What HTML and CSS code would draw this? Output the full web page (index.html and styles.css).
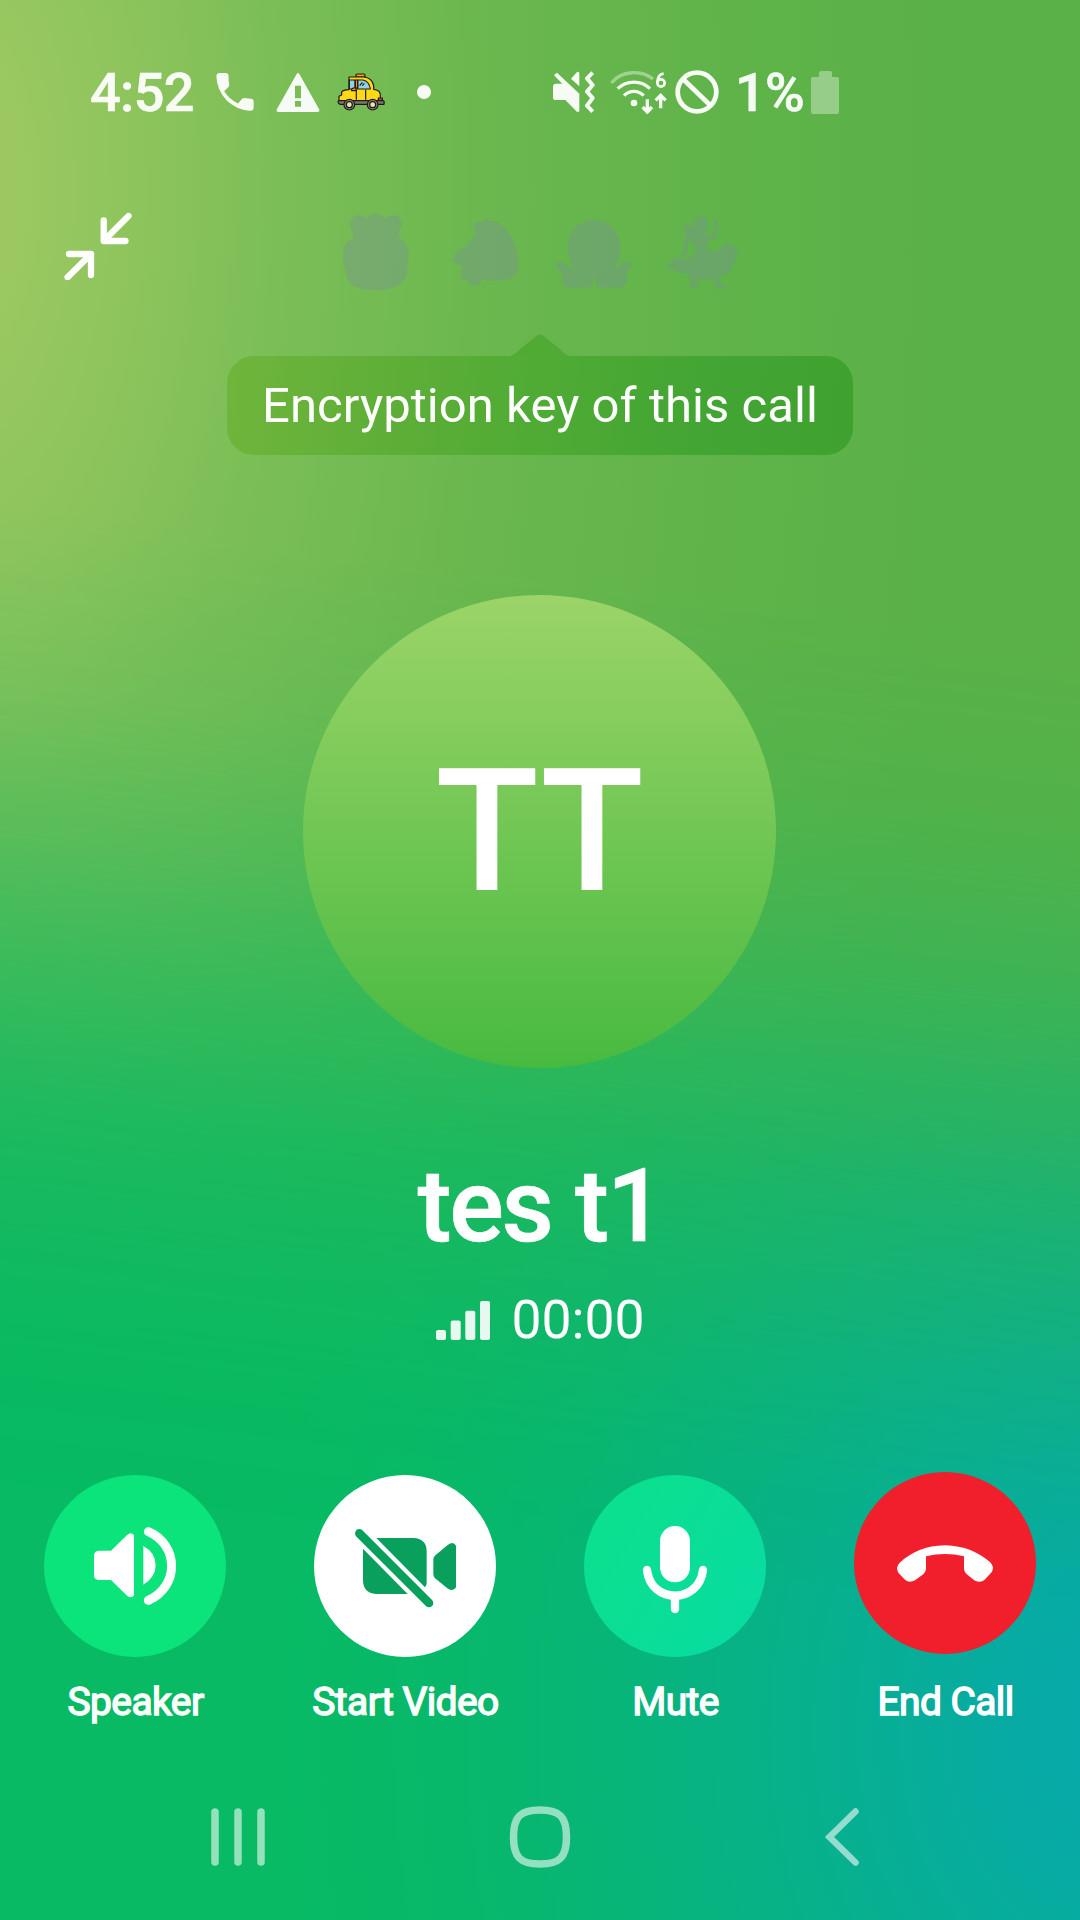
FILE: index.html
```html
<!DOCTYPE html>
<html lang="en">
<head>
<meta charset="utf-8">
<title>Call with tes t1</title>
<link rel="stylesheet" href="styles.css">
</head>
<body>
<main class="call-screen">
  <header class="status-bar">
    <span class="status-text clock">4:52</span>
    <svg class="st-phone" width="38" height="38" viewBox="0 0 110 112"><path fill="currentColor" d="M10 0H28Q36 1 36 9Q36 25 38 33Q39 38 35 42L23 54Q38 78 64 90L74 78Q79 73 85 74Q93 76 103 76Q110 77 110 84V101Q110 112 99 111Q58 108 30 80Q2 50 0 10Q0 1 10 0Z"/></svg>
    <svg class="st-warn" width="44" height="39" viewBox="0 0 132 117"><path fill="currentColor" fill-rule="evenodd" d="M62 3Q66 -3 70 3L129 108Q133 116 125 117H7Q-1 116 3 108ZM57 38H75V76H57ZM57 84H75V101H57Z"/></svg>
    <svg class="st-taxi" width="48" height="38" viewBox="772 70 144 114" stroke="#211a12" stroke-width="3.6" stroke-linejoin="round">
      <path fill="#f7a11b" d="M829 82V76Q830 73 834 73H852Q856 73 856 77V82Z"/>
      <path fill="#ffd918" d="M808 82H852Q878 85 882 108V119Q902 121 902 136V154H778V140L786 136V127Q790 121 808 120Z"/>
      <path fill="#8fd3e6" d="M809 91H826V118H809ZM834 91H850Q868 94 872 118H834Z"/>
      <path fill="none" d="M830 119V150M858 120V150M840 108L848 98M848 108L854 101"/>
      <path fill="#e78d22" d="M827 91H834V115H827Z"/>
      <path fill="#f7a11b" d="M816 119Q819 113 829 115V123H816Z"/>
      <path fill="#77777b" d="M778 153H910Q915 154 913 164H782Q776 163 775 156Z"/>
      <path fill="#ec5454" d="M896 145H908V152H896Z"/>
      <circle cx="809" cy="165" r="16" fill="#85858a"/><circle cx="809" cy="165" r="9" fill="#eee2b7"/>
      <circle cx="879" cy="165" r="16" fill="#85858a"/><circle cx="879" cy="165" r="9" fill="#eee2b7"/>
    </svg>
    <span class="more-dot"></span>
    <svg class="st-mute" width="42" height="42" viewBox="68 61 126 126"><path fill="currentColor" d="M72 72L80 66L147 129V182Q142 186 138 182L105 148H73Q68 147 68 142V106Q69 100 75 99H96L73 76ZM122 84L138 66Q143 61 147 66V107Z"/><path fill="none" stroke="currentColor" stroke-width="12" stroke-linejoin="round" d="M187 66L170 83L187 103L170 123L187 142L170 165L187 183"/></svg>
    <svg class="st-wifi" width="57" height="43" viewBox="240 60 171 129" fill="none" stroke="currentColor">
      <path stroke-width="10" opacity=".42" d="M244 96C275 58 333 56 369 84"/>
      <path stroke-width="10" d="M263 113C290 87 334 87 360 113M282 134C298 117 325 117 341 134M352 145V181M338 168L352 183L366 168M392 172V136M377 148L392 133L407 148"/>
      <circle cx="312" cy="156" r="10" fill="currentColor" stroke="none"/>
      <path stroke-width="8" d="M401 68C390 69 383 80 382 94"/><circle cx="393" cy="96" r="11" stroke-width="8"/>
    </svg>
    <svg class="st-block" width="44" height="44" viewBox="0 0 44 44" fill="none" stroke="currentColor" stroke-width="4.8"><circle cx="22" cy="22" r="19.3"/><path d="M8 9L36 36"/></svg>
    <span class="status-text percent">1%</span>
    <svg class="st-battery" width="28" height="43" viewBox="0 0 28 43"><path fill="currentColor" opacity=".38" d="M8 6V2Q8 0 10 0H19Q21 0 21 2V6H26Q28 6 28 8V41Q28 43 26 43H2Q0 43 0 41V8Q0 6 2 6Z"/></svg>
  </header>

  <section class="top-row">
    <svg class="minimize" width="68" height="68" viewBox="64 212 68 68" fill="none" stroke="#fff" stroke-width="6.3" stroke-linecap="round" stroke-linejoin="round"><path d="M128.5 216L104 240.5M103.7 220.5V241H125.5M67.6 277.3L91 254M69 254H91V275"/></svg>
    <svg class="emoji-key" width="440" height="110" viewBox="0 0 1320 330" fill="#7c8ea0" fill-opacity=".34">
      <path d="M100 113Q102 105 97 95C83 70 94 45 116 45Q131 46 140 57Q150 41 168 41Q186 42 196 57C211 40 238 42 244 64Q248 80 238 96Q235 106 238 114Q266 130 266 160L261 215C257 255 219 270 168 270C113 270 80 258 75 213Q69 190 69 160Q69 128 100 113Z"/>
      <path d="M463 90C455 73 469 61 485 69Q498 46 511 64Q530 57 540 75Q558 78 559 92Q574 98 573 111C590 142 597 178 595 203Q592 239 545 241Q516 242 485 239Q481 257 460 258Q445 256 442 241Q421 243 423 222L426 199L395 184Q408 147 443 138Q450 116 469 101Z"/>
      <path d="M764 206C747 187 743 158 744 137C746 91 781 59 822 59C867 59 901 97 901 145Q901 182 881 205Q900 202 906 190Q921 179 934 189Q939 204 918 220Q924 230 920 249Q913 250 909 260Q900 257 895 267Q884 259 874 266Q862 258 850 265Q842 259 829 261Q831 245 822 232Q816 243 817 261Q802 259 792 266Q781 259 771 266Q760 260 752 267Q743 258 736 260Q734 249 726 246Q724 233 728 222Q703 203 711 187Q728 182 739 194Q751 203 764 206Z"/>
      <path d="M1090 78Q1097 70 1104 80L1119 77Q1127 46 1147 48Q1168 55 1163 85L1159 101Q1167 110 1180 106L1182 61Q1189 55 1194 64L1190 112Q1179 122 1162 122V151Q1178 163 1200 148L1220 129Q1230 125 1240 138Q1254 150 1253 161L1233 211Q1220 223 1196 233Q1198 246 1218 265L1199 268L1181 251L1180 238L1143 241L1131 235Q1124 247 1139 262L1109 263L1110 232Q1102 215 1073 219L1064 209L1045 206Q1047 190 1065 172Q1081 177 1101 178Q1129 166 1128 143Q1126 126 1104 124L1102 159Q1098 170 1078 171Q1077 162 1089 158L1092 126L1099 108Q1087 92 1090 78Z"/>
    </svg>
  </section>

  <section class="tooltip-row">
    <div class="key-tooltip">
      <svg class="tooltip-arrow" width="60" height="22" viewBox="0 0 60 22"><path fill="#50ab34" d="M0 22Q5 21 9 16L25 3Q30 -2 35 3L51 16Q55 21 60 22Z"/></svg>
      <span>Encryption key of this call</span>
    </div>
  </section>

  <section class="caller">
    <div class="avatar">TT</div>
    <h1 class="caller-name">tes t1</h1>
    <div class="call-status">
      <svg width="54" height="39" viewBox="0 0 54 39" fill="#fff" fill-opacity=".9"><rect y="29" width="10" height="10" rx="2"/><rect x="14.7" y="19.5" width="10" height="19.5" rx="2"/><rect x="29.3" y="9.7" width="10" height="29.3" rx="2"/><rect x="44" width="10" height="39" rx="2"/></svg>
      <span class="timer">00:00</span>
    </div>
  </section>

  <section class="controls">
    <div class="control">
      <div class="disc speaker"><svg width="182" height="182" viewBox="42 45 546 546" fill="#fff"><path d="M206 272H243L292 224Q304 214 312 226V405Q305 417 292 408L243 360H206Q192 359 192 346V286Q193 273 206 272ZM340 258Q377 278 377 316Q377 352 340 374Z"/><path fill="none" stroke="#fff" stroke-width="27" stroke-linecap="round" d="M355 215C448 255 448 380 355 421"/></svg></div>
      <span class="label">Speaker</span>
    </div>
    <div class="control">
      <div class="disc video"><svg width="182" height="182" viewBox="852 45 546 546" fill="#08a05c"><path d="M1039 234H1150Q1190 236 1190 274V368Q1190 376 1185 382ZM999 266L1133 402H1038Q999 399 999 360ZM1217 285L1254 254Q1271 242 1278 257V382Q1271 396 1254 386L1217 356Q1210 351 1210 343V298Q1210 290 1217 285Z"/><path stroke="#08a05c" stroke-width="26" stroke-linecap="round" d="M988 220L1197 429"/></svg></div>
      <span class="label">Start Video</span>
    </div>
    <div class="control">
      <div class="disc mute"><svg width="182" height="182" viewBox="72 45 546 546" fill="#fff"><rect x="300" y="198" width="90" height="169" rx="45"/><path fill="none" stroke="#fff" stroke-width="25" stroke-linecap="round" d="M261 330C272 433 417 433 429 330M345 410V447"/></svg></div>
      <span class="label">Mute</span>
    </div>
    <div class="control">
      <div class="disc end"><svg width="182" height="182" viewBox="882 36 546 546" fill="#fff"><path d="M1155 256C1212 257 1255 277 1290 306Q1304 320 1296 335L1274 359Q1263 369 1245 362L1222 344Q1212 336 1212 325V289Q1155 275 1098 289V325Q1098 336 1087 345L1065 361Q1047 370 1035 359L1015 338Q1006 322 1019 308C1055 276 1098 257 1155 256Z"/></svg></div>
      <span class="label">End Call</span>
    </div>
  </section>

  <nav class="nav-bar">
    <svg width="58" height="62" viewBox="209 1806 58 62" fill="none" stroke="currentColor" stroke-width="7.5" stroke-linecap="round"><path d="M215 1812V1862M238 1812V1862M261 1812V1862"/></svg>
    <svg class="nav-home" width="64" height="64" viewBox="0 0 64 64" fill="none" stroke="currentColor" stroke-width="7.5"><path d="M32 5C12 5 5.500 12 5.500 32S12 59 32 59S58.500 52 58.500 32S52 5 32 5Z"/></svg>
    <svg width="36" height="62" viewBox="823 1806 36 62" fill="none" stroke="currentColor" stroke-width="6.500" stroke-linecap="round"><path d="M855.500 1811.500L829.500 1837L855.500 1862.500"/></svg>
  </nav>
</main>
</body>
</html>
```
FILE: styles.css
```css
* { box-sizing: border-box; }

body {
  margin: 0;
  font-family: Roboto, sans-serif;
  color: #fff;
}

svg { display: block; flex: none; }

.call-screen {
  position: relative;
  isolation: isolate;
  width: 1080px;
  height: 1920px;
  overflow: hidden;
  display: flex;
  flex-direction: column;
  background:
    radial-gradient(ellipse 880px 1060px at 1140px 1730px, #07a9ac 0%, rgba(7, 169, 172, .88) 16%, rgba(7, 169, 172, .5) 43%, rgba(7, 169, 172, .2) 68%, rgba(7, 169, 172, .05) 86%, rgba(7, 169, 172, 0) 100%),
    #07ba63;
}

/* upper half of the backdrop, fading into the lower colours */
.call-screen::before {
  content: "";
  position: absolute;
  z-index: -1;
  inset: 0;
  background:
    radial-gradient(ellipse 1020px 2000px at -60px 190px, #a0c962 0%, rgba(158, 201, 98, .95) 8%, rgba(155, 201, 98, .8) 19%, rgba(150, 200, 98, .56) 33%, rgba(148, 200, 98, .27) 55%, rgba(145, 200, 98, .08) 80%, rgba(145, 200, 98, 0) 100%),
    #5ab147;
  mask-image: linear-gradient(187deg, #000 31%, rgba(0, 0, 0, .9) 40%, rgba(0, 0, 0, .7) 47%, rgba(0, 0, 0, .46) 53.500%, rgba(0, 0, 0, .24) 60%, rgba(0, 0, 0, .1) 67%, rgba(0, 0, 0, .03) 73%, transparent 79%);
}

.status-bar {
  height: 184px;
  padding-left: 90px;
  display: flex;
  align-items: center;
  color: rgba(255, 255, 255, .94);
}

.status-text {
  font-size: 54px;
  line-height: 64px;
  font-weight: 500;
  -webkit-text-stroke: .6px currentColor;
  white-space: nowrap;
}

.clock { width: 126px; padding-top: 1px; letter-spacing: -.6px; }
.st-warn { margin-left: 22px; }
.st-taxi { margin-left: 17px; }
.more-dot { width: 14px; height: 14px; margin-left: 32px; border-radius: 50%; background: currentColor; }
.st-mute { margin-left: 122px; }
.st-wifi { margin-left: 15px; }
.st-block { margin-left: 8px; }
.percent { width: 76px; margin-left: 16px; padding-top: 1px; letter-spacing: -.6px; }

.top-row {
  height: 150px;
  padding-left: 64px;
  display: flex;
  align-items: flex-start;
}

.minimize { margin-top: 28px; }
.emoji-key { margin: 16px 0 0 188px; }

.tooltip-row {
  height: 261px;
  padding-top: 22px;
  display: flex;
  justify-content: center;
  align-items: flex-start;
}

.key-tooltip {
  position: relative;
  width: 626px;
  height: 99px;
  border-radius: 27px;
  display: flex;
  justify-content: center;
  align-items: center;
  font-size: 49px;
  letter-spacing: .05px;
  white-space: nowrap;
  background: linear-gradient(95deg, #70b53c 0%, #5dae37 28%, #4fab34 50%, #43a533 75%, #3fa22f 100%);
}

.tooltip-arrow { position: absolute; top: -22px; left: 283px; }

.caller {
  height: 860px;
  display: flex;
  flex-direction: column;
  align-items: center;
}

.avatar {
  width: 473px;
  height: 473px;
  margin-right: 1px;
  border-radius: 50%;
  display: flex;
  justify-content: center;
  align-items: center;
  font-size: 170px;
  font-weight: 500;
  background: linear-gradient(#9bd468, #48ba40);
}

.caller-name {
  margin: 78px 0 0;
  font-size: 102px;
  line-height: 120px;
  font-weight: 500;
  letter-spacing: -2.2px;
  -webkit-text-stroke: .6px #fff;
}

.call-status {
  margin: 22px 0 0 1px;
  display: flex;
  align-items: center;
  gap: 21px;
}

.timer { font-size: 53.5px; line-height: 64px; }

.controls {
  height: 333px;
  padding-top: 20px;
  display: grid;
  grid-template-columns: repeat(4, 1fr);
}

.control {
  display: flex;
  flex-direction: column;
  align-items: center;
}

.disc { width: 182px; height: 182px; border-radius: 50%; }
.speaker { background: #0be37b; }
.video { background: #fff; }
.mute { background: linear-gradient(120deg, #0be18a, #08dba3); }
.end { margin: -3px 0 3px; background: #f11e2c; }

.label {
  margin: 21px 0 0 1px;
  font-size: 39px;
  line-height: 48px;
  letter-spacing: -.6px;
  -webkit-text-stroke: 1.4px #fff;
  white-space: nowrap;
}

.nav-bar {
  height: 98px;
  padding: 0 221px 0 209px;
  display: flex;
  align-items: center;
  justify-content: space-between;
  color: rgba(255, 255, 255, .57);
}

.nav-home { margin-right: 10px; }
```
